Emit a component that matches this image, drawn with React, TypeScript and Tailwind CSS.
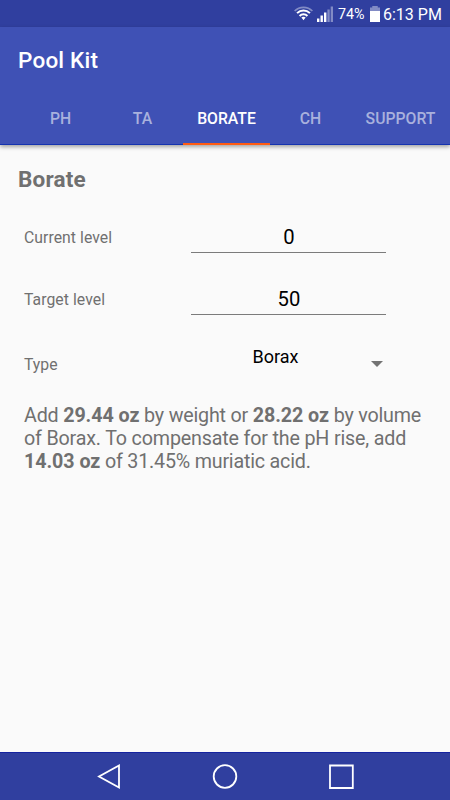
import { useState } from 'react';
import clsx from 'clsx';

const tabs = [
  { label: 'PH', width: 'w-[81px] pr-0.5' },
  { label: 'TA', width: 'w-[81px]' },
  { label: 'BORATE', width: 'w-[87px]' },
  { label: 'CH', width: 'w-[81px]' },
  { label: 'SUPPORT', width: 'w-[99px]' },
];

function StatusBar() {
  return (
    <div className="flex h-[27px] shrink-0 items-center justify-end bg-[#303f9f] pt-0.5 pr-[9px] text-white">
      <svg className="mr-[4px] mb-[3px] h-[15px] w-[19px]" viewBox="0 0 18 15" preserveAspectRatio="none" fill="none" stroke="currentColor">
        <path d="M0.6 5C5.2 0.2 12.8 0.2 17.4 5" strokeWidth="1.6" opacity="0.4" />
        <path d="M2.9 7.2C6.4 3.6 11.6 3.6 15.1 7.2" strokeWidth="1.9" />
        <path d="M5.3 10C7.4 7.7 10.6 7.7 12.7 10" strokeWidth="1.9" />
        <path d="M7 11.6C8.2 10.6 9.8 10.6 11 11.6L9 14.2Z" fill="currentColor" stroke="none" />
      </svg>
      <svg className="mr-[5px] mb-px h-4 w-4" viewBox="0 0 16 16" fill="currentColor">
        <path d="M0 12.5h2.4V16H0zM3.5 9.5h2.4V16H3.5zM7 6.5h2.4V16H7z" />
        <path d="M10.4 3.5h2.3V16h-2.3zM13.7 0.5H16V16h-2.3z" opacity="0.4" />
      </svg>
      <span className="w-[27px] text-[14.3px] leading-none whitespace-nowrap">74%</span>
      <svg className="mr-[3px] mb-px ml-[5px] h-4 w-[10px]" viewBox="0 0 11 16" preserveAspectRatio="none" fill="currentColor">
        <path d="M2.5 0h6v1.5H11V5H0V1.5h2.5z" opacity="0.4" />
        <path d="M0 5h11v11H0z" />
      </svg>
      <span className="w-[58px] text-[16px] leading-none whitespace-nowrap">6:13 PM</span>
    </div>
  );
}

type LevelRowProps = {
  label: string;
  value: string;
  onChange: (value: string) => void;
};

function LevelRow({ label, value, onChange }: LevelRowProps) {
  return (
    <label className="flex items-center">
      <span className="w-[167px] text-[15.75px] leading-[23px] tracking-[0.06px] text-[#707070]">{label}</span>
      <input
        className="h-[31px] w-[195px] border-b border-[#7b7b7b] pl-px text-center text-[20.25px] text-black outline-none"
        value={value}
        onChange={(e) => onChange(e.target.value)}
      />
    </label>
  );
}

function NavigationBar() {
  return (
    <div className="flex h-[48px] shrink-0 items-center border-t border-[#1523a0] bg-[#303f9f] pl-[97px]">
      <svg className="mr-[91px] h-[26px] w-[24px]" viewBox="0 0 24 26" fill="none" stroke="white" strokeWidth="1.8">
        <path d="M22 1.5V23.5L2 12.5Z" />
      </svg>
      <svg className="mr-[90px] h-[26px] w-[26px]" viewBox="0 0 26 26" fill="none" stroke="white" strokeWidth="1.8">
        <circle cx="13" cy="12.5" r="11.3" />
      </svg>
      <svg className="h-[26px] w-[26px]" viewBox="0 0 26 26" fill="none" stroke="white" strokeWidth="1.8">
        <path d="M2 1.5h22.8v22.5H2z" />
      </svg>
    </div>
  );
}

export default function App() {
  const [activeTab, setActiveTab] = useState('BORATE');
  const [current, setCurrent] = useState('0');
  const [target, setTarget] = useState('50');

  return (
    <div className="flex h-[800px] w-[450px] flex-col overflow-hidden bg-[#fafafa] font-['Roboto',sans-serif]">
      <StatusBar />

      <header className="flex h-[118px] shrink-0 flex-col border-b border-[#1533b0] bg-[#3f51b5] shadow-[0_2px_4px_rgba(0,0,0,0.35)]">
        <h1 className="flex h-[66px] items-center pt-px pl-[18px] text-[22.5px] font-medium tracking-[0.2px] text-white">Pool Kit</h1>
        <nav className="-mb-px flex h-[52px] pl-[21px]">
          {tabs.map((tab) => (
            <button
              key={tab.label}
              onClick={() => setActiveTab(tab.label)}
              className={clsx(
                'shrink-0 border-b-2 pt-px text-[15.75px] font-medium',
                tab.width,
                tab.label === activeTab ? 'border-[#ff5b12] text-white' : 'border-transparent text-[#a9b1dd]'
              )}
            >
              {tab.label}
            </button>
          ))}
        </nav>
      </header>

      <main className="flex-1 px-[18px] pt-[21px] text-[#707070]">
        <h2 className="text-[22.5px] leading-[27px] font-bold tracking-[0.2px]">Borate</h2>
        <div className="mt-[29px] flex flex-col gap-[31px] pl-1.5">
          <LevelRow label="Current level" value={current} onChange={setCurrent} />
          <LevelRow label="Target level" value={target} onChange={setTarget} />
        </div>

        <div className="mt-[28px] flex h-[42px] pl-1.5">
          <span className="w-[167px] pt-[10px] text-[15.75px]">Type</span>
          <button className="flex w-[196px] items-start">
            <span className="w-[169px] pt-px text-center text-[18px] leading-[26px] text-black">Borax</span>
            <svg className="mt-[18px] ml-[11px] h-[6px] w-[12px]" viewBox="0 0 12 6" fill="#737373">
              <path d="M0 0h12L6 6z" />
            </svg>
          </button>
        </div>

        <p className="mt-[19px] pl-1.5 text-[19.7px] leading-[23px] tracking-[-0.2px] whitespace-nowrap">
          Add <b className="tracking-[-0.06px]">29.44 oz</b> by weight or <b className="tracking-[-0.06px]">28.22 oz</b> by volume
          <br />
          <span className="tracking-[-0.17px]">of Borax. To compensate for the pH rise, add</span>
          <br />
          <b className="tracking-[-0.06px]">14.03 oz</b> of 31.45% muriatic acid.
        </p>
      </main>

      <NavigationBar />
    </div>
  );
}
